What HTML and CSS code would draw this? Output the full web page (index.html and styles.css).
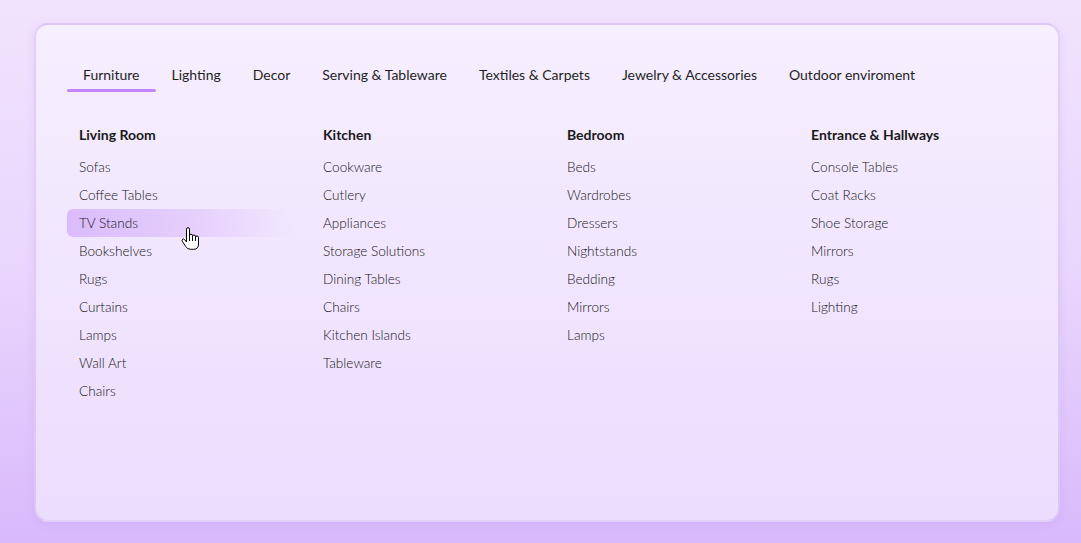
FILE: index.html
```html
<!DOCTYPE html>
<html>
<head>
<meta charset="utf-8">
<link rel="stylesheet" href="styles.css">
</head>
<body>
<div class="card">
  <nav class="tabs">
    <a class="tab active">Furniture</a>
    <a class="tab">Lighting</a>
    <a class="tab">Decor</a>
    <a class="tab">Serving &amp; Tableware</a>
    <a class="tab">Textiles &amp; Carpets</a>
    <a class="tab">Jewelry &amp; Accessories</a>
    <a class="tab">Outdoor enviroment</a>
  </nav>
  <div class="menu">
    <div class="col">
      <div class="head">Living Room</div>
      <div class="item">Sofas</div>
      <div class="item">Coffee Tables</div>
      <div class="item hover">TV Stands
        <svg class="cursor" width="18" height="24" viewBox="0 0 18 24"><path d="M5.5 2.2a1.5 1.5 0 0 1 3 0V10V8.7a1.5 1.5 0 0 1 3 0V10.5V9.5a1.5 1.5 0 0 1 3 0V11V10.5a1.5 1.5 0 0 1 3 0V17q0 5.3-5 5.3H9.5q-3 0-4.8-2.8L1.3 14.2a1.4 1.4 0 0 1 2.3-1.6L5.5 15Z" fill="#fff" stroke="#000" stroke-width="1" stroke-linejoin="round"/><path d="M8.5 10v4M11.5 10.5v3.5M14.5 11v3" stroke="#000" stroke-width="1"/></svg>
      </div>
      <div class="item">Bookshelves</div>
      <div class="item">Rugs</div>
      <div class="item">Curtains</div>
      <div class="item">Lamps</div>
      <div class="item">Wall Art</div>
      <div class="item">Chairs</div>
    </div>
    <div class="col">
      <div class="head">Kitchen</div>
      <div class="item">Cookware</div>
      <div class="item">Cutlery</div>
      <div class="item">Appliances</div>
      <div class="item">Storage Solutions</div>
      <div class="item">Dining Tables</div>
      <div class="item">Chairs</div>
      <div class="item">Kitchen Islands</div>
      <div class="item">Tableware</div>
    </div>
    <div class="col">
      <div class="head">Bedroom</div>
      <div class="item">Beds</div>
      <div class="item">Wardrobes</div>
      <div class="item">Dressers</div>
      <div class="item">Nightstands</div>
      <div class="item">Bedding</div>
      <div class="item">Mirrors</div>
      <div class="item">Lamps</div>
    </div>
    <div class="col">
      <div class="head">Entrance &amp; Hallways</div>
      <div class="item">Console Tables</div>
      <div class="item">Coat Racks</div>
      <div class="item">Shoe Storage</div>
      <div class="item">Mirrors</div>
      <div class="item">Rugs</div>
      <div class="item">Lighting</div>
    </div>
  </div>
</div>
</body>
</html>
```
FILE: styles.css
```css
* { box-sizing: border-box; }
html, body { height: 100%; }
body {
  margin: 0;
  padding: 23px 21px 21px 34px;
  background: linear-gradient(180deg, #f1e3fd 0%, #e9d6fd 50%, #d9b9fb 100%);
  font-family: "Lato", "Noto Sans", sans-serif;
  font-size: 14px;
  color: #1c1c1c;
  overflow: hidden;
}
.card {
  height: 100%;
  border: 2px solid rgba(205, 170, 240, 0.45);
  border-radius: 14px;
  background: linear-gradient(180deg, #f6effe 0%, #f1e6fe 45%, #ecdcfe 100%);
  box-shadow: 0 2px 8px rgba(150, 90, 220, 0.12);
  padding: 32px 31px;
}
.tabs {
  display: flex;
}
.tab {
  position: relative;
  padding: 8px 16px 7px;
  line-height: 20px;
  color: #1f1f1f;
  white-space: nowrap;
}
.tab.active::after {
  content: "";
  position: absolute;
  left: 0;
  right: 0;
  bottom: 0;
  height: 3px;
  border-radius: 2px;
  background: #c385fb;
}
.menu {
  display: grid;
  grid-template-columns: repeat(4, 220px);
  column-gap: 24px;
  margin-top: 33px;
}
.head {
  font-weight: 700;
  line-height: 20px;
  padding: 0 12px;
  margin-bottom: 8px;
  color: #1a1a1a;
}
.item {
  position: relative;
  line-height: 20px;
  padding: 4px 12px;
  border-radius: 6px;
  color: #161616;
  font-size: 13.6px;
  font-weight: 300;
}
.item.hover {
  width: 226px;
  background: linear-gradient(90deg, rgba(200, 150, 250, 0.55) 0%, rgba(210, 170, 250, 0.4) 55%, rgba(230, 205, 252, 0) 100%);
}
.cursor {
  position: absolute;
  left: 114px;
  top: 18px;
}
```
